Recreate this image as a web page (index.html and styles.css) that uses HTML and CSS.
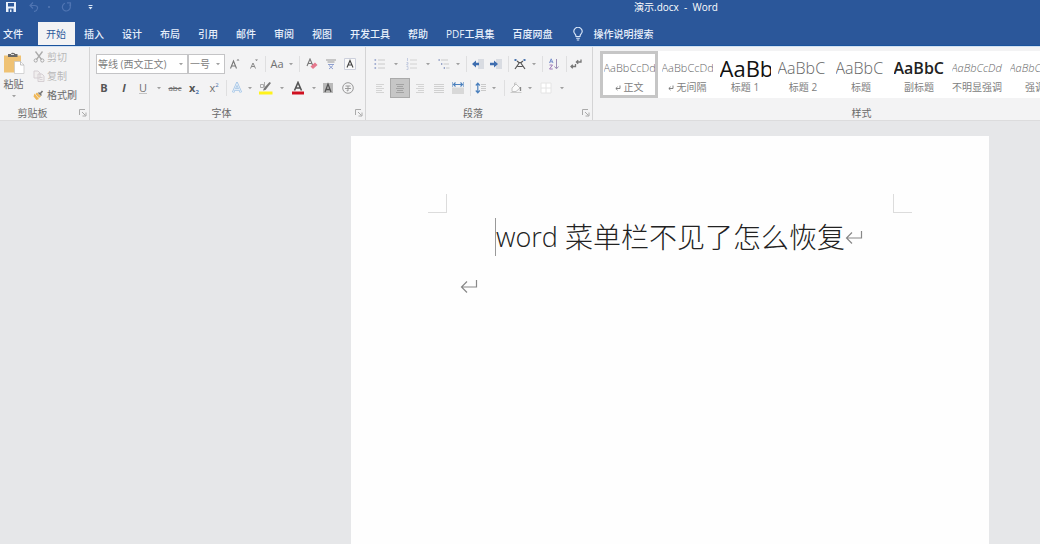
FILE: index.html
```html
<!DOCTYPE html>
<html lang="zh-CN">
<head>
<meta charset="utf-8">
<title>演示.docx - Word</title>
<link rel="stylesheet" href="styles.css">
</head>
<body>
<svg class="defs" aria-hidden="true">
  <symbol id="caret" viewBox="0 0 6 4"><path d="M1 1h4L3 3.200z" fill="#a0a0a0"/></symbol>
  <symbol id="launch" viewBox="0 0 8 8"><path d="M.5 6V.5H6M3 3l3.500 3.500M7 3.500V7H3.500" fill="none" stroke="#aaa"/></symbol>
  <symbol id="ret" viewBox="0 0 18 18"><path d="M16.500 3v7H2M7 4.500L1.500 10 7 15.500" fill="none" stroke="#888" stroke-width="1.200"/></symbol>
  <symbol id="smallret" viewBox="0 0 6 6"><path d="M5 .5V3.500H1M2.600 1.800L.8 3.500l1.800 1.700" fill="none" stroke="#777" stroke-width=".9"/></symbol>
</svg>
<header class="header">
  <div class="titlebar">
    <div class="quick">
      <button class="qbtn" aria-label="保存"><svg width="10" height="10" viewBox="0 0 10 10"><path d="M0 0h10v10H0z" fill="#e8f0fb"/><path d="M2 1h6v3.500H2zM2.500 6.500h5V10h-5z" fill="#2b579a"/><path d="M4 7.500h1.500V10H4z" fill="#e8f0fb"/></svg></button>
      <button class="qbtn wide" aria-label="撤消"><svg width="10" height="10" viewBox="0 0 10 10"><path d="M4 .5L1 3.500l3 3M1 3.500h4.500q3.500.2 3 3Q8 9 5 9.500" fill="none" stroke="#4f74b2" stroke-width="1.200"/></svg></button>
      <span class="qdot"></span>
      <button class="qbtn wide" aria-label="恢复"><svg width="11" height="10" viewBox="0 0 11 10"><path d="M8.500 2.500A4 4 0 1 1 4 1.200M6 .8h3.500v3.500" fill="none" stroke="#4f74b2" stroke-width="1.200"/></svg></button>
      <button class="qbtn more" aria-label="自定义快速访问工具栏"><svg width="5" height="5" viewBox="0 0 5 5"><path d="M.5 0h4v1h-4zM.5 2h4l-2 2.500z" fill="#dfe9f7"/></svg></button>
    </div>
    <div class="doctitle">演示.docx &nbsp;-&nbsp; Word</div>
  </div>
  <nav class="tabs">
    <button class="tab first">文件</button>
    <button class="tab active">开始</button>
    <button class="tab">插入</button>
    <button class="tab">设计</button>
    <button class="tab">布局</button>
    <button class="tab">引用</button>
    <button class="tab">邮件</button>
    <button class="tab">审阅</button>
    <button class="tab">视图</button>
    <button class="tab">开发工具</button>
    <button class="tab">帮助</button>
    <button class="tab">PDF工具集</button>
    <button class="tab">百度网盘</button>
    <button class="tab tell"><svg width="10" height="14" viewBox="0 0 10 14"><path d="M3 9.500Q3 8 2 7A4 4 0 1 1 8 7Q7 8 7 9.500zM3.200 11.300h3.600M3.800 13h2.400" fill="none" stroke="#dbe8fa" stroke-width="1.100"/></svg>操作说明搜索</button>
  </nav>
</header>
<section class="ribbon">
  <div class="group clipboard">
    <div class="content clip">
      <button class="paste">
        <svg width="22" height="22" viewBox="0 0 22 22"><path d="M1 3.500h17v17H1z" fill="#efc274"/><path d="M5 2h3q.5-2 3-1 .8 0 1 1h2.500v3H5z" fill="#686868"/><path d="M8 2h3v1H8z" fill="#ddd"/><path d="M11.500 9.500h6l3.500 3.500v8.500h-9.500z" fill="#fff" stroke="#c4c4c4" stroke-width=".7"/><path d="M17.500 9.500V13H21" fill="none" stroke="#aaa" stroke-width=".7"/></svg>
        <span>粘贴</span>
        <svg width="6" height="4"><use href="#caret"/></svg>
      </button>
      <div class="cliplist">
        <button class="cmd off"><svg width="12" height="12" viewBox="0 0 12 12"><path d="M2.500.5l6 8M9.500.5l-6 8" stroke="#aaa" stroke-width="1.300"/><g fill="none" stroke="#aaa"><circle cx="2.700" cy="9.500" r="1.600"/><circle cx="9.300" cy="9.500" r="1.600"/></g></svg>剪切</button>
        <button class="cmd off"><svg width="12" height="12" viewBox="0 0 12 12"><path d="M1 1h4l2 2v5H1zM5 4h4l2 2v5.500H5z" fill="#f0eeee" stroke="#d2ccd0" stroke-width=".9"/><path d="M6.500 7.500h3M6.500 9.500h3" stroke="#d2ccd0" stroke-width=".8"/></svg>复制</button>
        <button class="cmd"><svg width="12" height="12" viewBox="0 0 12 12"><path d="M1.500 4.500L6 10l-2.500 1-3-3.500z" fill="#efb757"/><path d="M4 3.500l4 4-2 1.500L2.500 5z" fill="#efb757"/><path d="M5.500 3.500l3 3" stroke="#777" stroke-width="1.500"/><path d="M7 5l2.500-3" stroke="#777" stroke-width="1.600"/></svg>格式刷</button>
      </div>
    </div>
    <div class="foot"><span>剪贴板</span><button class="launch" aria-label="剪贴板设置"><svg width="8" height="8"><use href="#launch"/></svg></button></div>
  </div>

  <div class="group font">
    <div class="content rows">
      <div class="row">
        <label class="combo w92"><select aria-label="字体"><option>等线 (西文正文)</option></select><svg width="6" height="4"><use href="#caret"/></svg></label>
        <label class="combo w37"><select aria-label="字号"><option>一号</option></select><svg width="6" height="4"><use href="#caret"/></svg></label>
        <button class="b w20" aria-label="增大字号"><svg width="12" height="12" viewBox="0 0 12 12"><path d="M1.500 10.500L4.500 3l3 7.500M2.600 8h3.800" fill="none" stroke="#777" stroke-width="1.100"/><path d="M7.500 2.500L9 1 10.500 2.500z" fill="#777"/></svg></button>
        <button class="b w18" aria-label="减小字号"><svg width="12" height="12" viewBox="0 0 12 12"><path d="M2.500 10.500L5 5l2.500 5.500M3.500 8.500h3" fill="none" stroke="#888"/><path d="M7 1.500h3L8.500 3z" fill="#777"/></svg></button>
        <span class="sep w4"></span>
        <button class="b w20 txt">Aa</button>
        <button class="b w8" aria-label="更改大小写选项"><svg width="6" height="4"><use href="#caret"/></svg></button>
        <span class="sep w8"></span>
        <button class="b w18" aria-label="清除格式"><svg width="12" height="12" viewBox="0 0 12 12"><path d="M1 8L4 1l3 7M2.200 5.500h3.600" fill="none" stroke="#777" stroke-width="1.100"/><path d="M4.500 8.500l4.500-4 2.500 2.500-4.500 4z" fill="#e5788d"/></svg></button>
        <button class="b w20" aria-label="拼音指南"><svg width="12" height="12" viewBox="0 0 12 12"><path d="M1 2h10M2.500 4h7" stroke="#999"/><path d="M3 6.500h6M4 7.500l4 3.500M8 7.500L4 11" fill="none" stroke="#8e9fd0"/></svg></button>
        <button class="b w18" aria-label="字符边框"><svg width="12" height="12" viewBox="0 0 12 12"><path d="M.5.5h11v11H.5z" fill="#fafafa" stroke="#cdd0dc"/><path d="M3 9.500l3-7 3 7M4.200 7h3.600" fill="none" stroke="#444" stroke-width="1.100"/></svg></button>
      </div>
      <div class="row">
        <button class="b w20 txt bold">B</button>
        <button class="b w20 txt bold ital">I</button>
        <button class="b w18 txt under">U</button>
        <button class="b w14" aria-label="下划线选项"><svg width="6" height="4"><use href="#caret"/></svg></button>
        <button class="b w18 strike">abc</button>
        <button class="b w20 txt bold">x<sub>2</sub></button>
        <button class="b w20 txt">x<sup>2</sup></button>
        <span class="sep w4"></span>
        <button class="b w18" aria-label="文本效果"><svg width="12" height="12" viewBox="0 0 12 12"><path d="M2 10.500L6 1.500l4 9M3.500 7.500h5" fill="none" stroke="#a4c5e6" stroke-width="2.400"/><path d="M2 10.500L6 1.500l4 9M3.500 7.500h5" fill="none" stroke="#f1f6fb" stroke-width=".8"/></svg></button>
        <button class="b w8" aria-label="文本效果选项"><svg width="6" height="4"><use href="#caret"/></svg></button>
        <button class="b w24" aria-label="突出显示"><svg width="14" height="14" viewBox="0 0 14 14"><path d="M0 10.500h13.500V13.500H0z" fill="#fff21b"/><path d="M12 2L6.500 9 4 9.500l1-2.500 5.500-6z" fill="#777"/><path d="M1.500 3.500h3v3h-3zM5.500 1v5" fill="none" stroke="#999" stroke-width=".8"/></svg></button>
        <button class="b w8" aria-label="突出显示选项"><svg width="6" height="4"><use href="#caret"/></svg></button>
        <button class="b w24" aria-label="字体颜色"><svg width="14" height="14" viewBox="0 0 14 14"><path d="M1 10.500h12V13.500H1z" fill="#cf1020"/><path d="M3.500 9.500L7 1.500l3.500 8M4.700 7h4.600" fill="none" stroke="#555" stroke-width="1.600"/></svg></button>
        <button class="b w8" aria-label="字体颜色选项"><svg width="6" height="4"><use href="#caret"/></svg></button>
        <button class="b w20" aria-label="字符底纹"><svg width="12" height="12" viewBox="0 0 12 12"><path d="M1 1h10v10H1z" fill="#b9b9b9"/><path d="M3 10l3-8 3 8M4 7.500h4" fill="none" stroke="#555" stroke-width="1.300"/></svg></button>
        <button class="b w20" aria-label="带圈字符"><svg width="12" height="12" viewBox="0 0 12 12"><circle cx="6" cy="6" r="5.300" fill="none" stroke="#999"/><path d="M3.500 4h5M3 6.500h6M6 4v5L4.700 8.500" fill="none" stroke="#999"/></svg></button>
      </div>
    </div>
    <div class="foot"><span>字体</span><button class="launch" aria-label="字体设置"><svg width="8" height="8"><use href="#launch"/></svg></button></div>
  </div>

  <div class="group para">
    <div class="content rows">
      <div class="row">
        <button class="b w20" aria-label="项目符号"><svg width="12" height="12" viewBox="0 0 12 12"><path d="M4 2h7M4 6h7M4 10h7" stroke="#cacaca"/><path d="M.5 1.200h1.600v1.600H.5zM.5 5.200h1.600v1.600H.5zM.5 9.200h1.600v1.600H.5z" fill="#8d9cc8"/></svg></button>
        <button class="b w12" aria-label="项目符号选项"><svg width="6" height="4"><use href="#caret"/></svg></button>
        <button class="b w20" aria-label="编号"><svg width="12" height="12" viewBox="0 0 12 12"><path d="M4 2h7M4 6h7M4 10h7" stroke="#d2d2d2"/><path d="M1.500 0v3M.5 4.500h1.500v1.500H.8v1h1.500M.5 8.500h1.500v3H.5" fill="none" stroke="#b9c2da" stroke-width=".8"/></svg></button>
        <button class="b w12" aria-label="编号选项"><svg width="6" height="4"><use href="#caret"/></svg></button>
        <button class="b w20" aria-label="多级列表"><svg width="12" height="12" viewBox="0 0 12 12"><path d="M3 2h7M5.500 6H11M8 10h3.500" stroke="#cacaca"/><path d="M.5 1h1.300v2H.5zM3 5h1.300v2H3zM5.700 9H7v2H5.700z" fill="#9aa6c8"/></svg></button>
        <button class="b w8" aria-label="多级列表选项"><svg width="6" height="4"><use href="#caret"/></svg></button>
        <span class="sep w8"></span>
        <button class="b w16" aria-label="减少缩进"><svg width="12" height="12" viewBox="0 0 12 12"><path d="M6 1h6v10H6z" fill="#d9dce2"/><path d="M0 6l4-3.500v2.300h3v2.400H4v2.300z" fill="#3f6eb0"/></svg></button>
        <button class="b w20" aria-label="增加缩进"><svg width="12" height="12" viewBox="0 0 12 12"><path d="M6 1h6v10H6z" fill="#d9dce2"/><path d="M8 6L4 2.500v2.300H0v2.400h4v2.300z" fill="#3f6eb0"/></svg></button>
        <span class="sep w4"></span>
        <button class="b w20" aria-label="中文版式"><svg width="12" height="12" viewBox="0 0 12 12"><path d="M1 11l4.500-6.500h1L11 11M3.500 8.500h5M3 3l2.500 2M9 3L6.500 5" fill="none" stroke="#555" stroke-width="1.200"/><path d="M.5 1h2v2h-2zM9.500 1h2v2h-2z" fill="#4b74ad"/></svg></button>
        <button class="b w8" aria-label="中文版式选项"><svg width="6" height="4"><use href="#caret"/></svg></button>
        <span class="sep w8"></span>
        <button class="b w16" aria-label="排序"><svg width="12" height="12" viewBox="0 0 12 12"><path d="M1.500 5L3.200.8 5 5M2 3.800h2.500" fill="none" stroke="#7c92cc"/><path d="M1.500 7h3l-3 4h3.300" fill="none" stroke="#a07bb8"/><path d="M8.500 1v9.500M6.500 8.500l2 2.300 2-2.300" fill="none" stroke="#9c8db5"/></svg></button>
        <span class="sep w8"></span>
        <button class="b w12" aria-label="显示编辑标记"><svg width="12" height="12" viewBox="0 0 12 12"><path d="M11 1.500v2.500H6.500M8.200 2.200L6.400 4l1.800 1.800M5.500 6v2.500H1M2.800 6.700L1 8.500l1.800 1.800" fill="none" stroke="#777" stroke-width="1.300"/></svg></button>
      </div>
      <div class="row">
        <button class="b w20" aria-label="左对齐"><svg width="10" height="10" viewBox="0 0 10 10"><path d="M1 1.500h8M1 3.500h6M1 5.500h8M1 7.500h6M1 9.500h8" stroke="#d4d4d4"/></svg></button>
        <button class="b w20 on" aria-label="居中"><svg width="10" height="10" viewBox="0 0 10 10"><path d="M1 1.500h8M2 3.500h6M1 5.500h8M2 7.500h6M1 9.500h8" stroke="#a2a2a2"/></svg></button>
        <button class="b w20" aria-label="右对齐"><svg width="10" height="10" viewBox="0 0 10 10"><path d="M1 1.500h8M3 3.500h6M1 5.500h8M3 7.500h6M1 9.500h8" stroke="#d4d4d4"/></svg></button>
        <button class="b w18" aria-label="两端对齐"><svg width="10" height="10" viewBox="0 0 10 10"><path d="M0 1.500h10M0 3.500h10M0 5.500h10M0 7.500h10M0 9.500h10" stroke="#d0d0d0"/></svg></button>
        <button class="b w20" aria-label="分散对齐"><svg width="12" height="12" viewBox="0 0 12 12"><path d="M0 5.500h12V12H0z" fill="#d8d8d8"/><path d="M0 0v5M12 0v5M1 2.500h10M3.500.5l-2 2 2 2M8.500.5l2 2-2 2" fill="none" stroke="#4b80bd" stroke-width="1.100"/></svg></button>
        <span class="sep w4"></span>
        <button class="b w18" aria-label="行距"><svg width="12" height="12" viewBox="0 0 12 12"><path d="M6 2.500h5M6 4.500h5M6 6.500h5M6 8.500h5" stroke="#cacaca"/><path d="M2.800 1v10M.8 3.500l2-2.300 2 2.300M.8 8.500l2 2.300 2-2.300" fill="none" stroke="#4b80bd" stroke-width="1.200"/></svg></button>
        <button class="b w8" aria-label="行距选项"><svg width="6" height="4"><use href="#caret"/></svg></button>
        <span class="sep w12"></span>
        <button class="b w12" aria-label="底纹"><svg width="12" height="12" viewBox="0 0 12 12"><path d="M2 6l4-4 4 4-4 3.500H2zM4.500 4V1h2" fill="#fafafa" stroke="#c4c4c4"/><path d="M10.500 5v4" stroke="#888" stroke-width="1.300"/><path d="M.5 10.500h11" stroke="#ccc"/></svg></button>
        <button class="b w16" aria-label="底纹选项"><svg width="6" height="4"><use href="#caret"/></svg></button>
        <button class="b w16" aria-label="边框"><svg width="12" height="12" viewBox="0 0 12 12"><path d="M1 1h10v10H1zM6 1v10M1 6h10" fill="#fff" stroke="#e4e4e4"/></svg></button>
        <button class="b w16" aria-label="边框选项"><svg width="6" height="4"><use href="#caret"/></svg></button>
      </div>
    </div>
    <div class="foot"><span>段落</span><button class="launch" aria-label="段落设置"><svg width="8" height="8"><use href="#launch"/></svg></button></div>
  </div>

  <div class="group styles">
    <div class="content gallery">
      <button class="style sel"><span class="sample">AaBbCcDd</span><span class="name"><svg width="6" height="6"><use href="#smallret"/></svg>正文</span></button>
      <button class="style"><span class="sample">AaBbCcDd</span><span class="name"><svg width="6" height="6"><use href="#smallret"/></svg>无间隔</span></button>
      <button class="style"><span class="sample h1">AaBb</span><span class="name">标题 1</span></button>
      <button class="style"><span class="sample h2">AaBbC</span><span class="name">标题 2</span></button>
      <button class="style"><span class="sample h2">AaBbC</span><span class="name">标题</span></button>
      <button class="style"><span class="sample h2 strong">AaBbC</span><span class="name">副标题</span></button>
      <button class="style"><span class="sample em">AaBbCcDd</span><span class="name">不明显强调</span></button>
      <button class="style"><span class="sample em">AaBbCcDd</span><span class="name">强调</span></button>
    </div>
    <div class="foot"><span>样式</span></div>
  </div>
</section>
<main class="workspace">
  <article class="page">
    <div class="corners"><i class="corner left"></i><i class="corner right"></i></div>
    <div class="body">
      <h1 class="heading"><span class="cursor"></span><span class="latin">word </span>菜单栏不见了怎么恢复<svg class="mark" width="18" height="18"><use href="#ret"/></svg></h1>
      <p class="line"><svg width="18" height="18"><use href="#ret"/></svg></p>
    </div>
  </article>
</main>
</body>
</html>
```

FILE: styles.css
```css
* { box-sizing: border-box; }
body {
  margin: 0;
  min-height: 100vh;
  display: flex;
  flex-direction: column;
  overflow-x: hidden;
  background: #e6e7e9;
  font-family: "Open Sans", "Noto Sans CJK SC", sans-serif;
  font-size: 10px;
  line-height: 14px;
  color: #6a6a6a;
}
button {
  margin: 0;
  padding: 0;
  border: 0;
  background: none;
  font: inherit;
  color: inherit;
  white-space: nowrap;
}
svg { display: block; flex: none; }
.defs { position: absolute; width: 0; height: 0; }

.header { background: #2b579a; color: #e9f1fc; border-bottom: 1px solid #1a539c; }
.titlebar { display: grid; grid-template-columns: 1fr auto 1fr; height: 22px; padding-left: 6px; }
.quick { display: flex; align-items: center; height: 14px; }
.qbtn { display: flex; justify-content: center; width: 10px; }
.qbtn.wide { width: 24px; margin-left: 6px; }
.qbtn.more { width: 24px; }
.qdot { width: 2px; height: 2px; margin-left: 2px; background: #4a70ad; }
.qdot + .qbtn.wide { margin-left: 4px; }
.doctitle { grid-column: 2; margin-left: 306px; color: #fff; }
.tabs { display: flex; }
.tab { height: 23px; padding: 0 9px; font-weight: 500; }
.tab.first { padding: 0 15px 0 3px; }
.tab.active { background: #f3f3f4; color: #2b579a; font-weight: 400; padding: 0 9px 0 8px; }
.tab.tell { display: flex; align-items: center; gap: 10px; padding-left: 12px; }

.ribbon {
  display: flex;
  height: 75px;
  overflow: hidden;
  background: #f3f3f4;
  border-top: 1px solid #cfe0f3;
  border-bottom: 1px solid #dcdcdd;
}
.group { display: flex; flex-direction: column; flex: none; padding: 3px 0 0; border-right: 1px solid #d4d4d5; }
.content { flex: 1; }
.foot { display: flex; align-items: center; height: 14px; text-align: center; }
.foot span { flex: 1; }
.launch { display: flex; justify-content: center; width: 12px; }
.clipboard { width: 90px; }
.clipboard .foot span { padding-right: 12px; }
.font { width: 276px; }
.para { width: 227px; }

.clip { display: flex; gap: 6px; }
.paste { display: flex; flex-direction: column; align-items: center; width: 27px; padding-top: 2px; }
.paste span { margin: 3px 0; }
.cliplist { display: flex; flex-direction: column; gap: 5px; }
.cmd { display: flex; align-items: center; gap: 2px; height: 14px; }
.off { color: #b8b8b8; }

.rows { display: flex; flex-direction: column; gap: 4px; padding: 4px 0 0 4px; }
.row { display: flex; align-items: center; height: 20px; }
.b { display: flex; align-items: center; justify-content: center; height: 20px; flex: none; }
.on { background: #c6c6c6; border: 1px solid #aaa; }
.w4 { width: 4px; } .w8 { width: 8px; } .w12 { width: 12px; } .w14 { width: 14px; }
.w16 { width: 16px; } .w18 { width: 18px; } .w20 { width: 20px; } .w24 { width: 24px; }
.sep { display: flex; justify-content: center; height: 16px; }
.sep::before { content: ""; width: 1px; background: #dfdfe0; }
.txt { font-size: 11px; color: #707070; }
.bold { font-weight: 700; color: #555; }
.ital { font-style: italic; }
.under { text-decoration: underline #c4c4c4; }
.strike { font-size: 8px; text-decoration: line-through; }
sub, sup { font-size: 6px; line-height: 6px; }
sup { align-self: flex-start; padding-top: 4px; color: #4b74ad; }
sub { align-self: flex-end; padding-bottom: 3px; color: #4b74ad; }
.combo { display: flex; align-items: center; height: 20px; padding-right: 3px; background: #fff; border: 1px solid #c4c4c6; flex: none; }
.combo select { flex: 1; min-width: 0; height: 18px; padding: 0 0 0 1px; border: 0; appearance: none; background: none; font: inherit; color: #808080; }
.w92 { width: 92px; margin-left: 2px; }
.w37 { width: 37px; }

.styles { padding-right: 60px; }
.gallery { display: flex; margin: 1px 0 0 7px; flex: none; height: 47px; background: #fff; }
.group.styles .foot { margin-top: auto; padding-left: 66px; }
.style { display: flex; flex-direction: column; align-items: center; width: 58px; padding: 4px 3px 0; overflow: hidden; }
.sel { border: 3px solid #c6c6c6; padding: 1px 0 0; }
.sample { width: 51px; height: 26px; line-height: 26px; overflow: hidden; text-align: left; font-size: 11px; font-weight: 300; color: #666; }
.sample.h1 { font-size: 22px; font-weight: 400; color: #111; }
.sample.h2 { font-size: 16px; }
.sample.strong { font-weight: 600; color: #222; }
.sample.em { font-style: italic; }
.name { display: flex; align-items: center; gap: 3px; white-space: pre; line-height: 13px; color: #808080; }

.workspace { flex: 1; display: flex; padding: 15px 51px 0 351px; }
.page { flex: 1; background: #fefefe; padding: 58px 77px 0; }
.corners { display: flex; justify-content: space-between; }
.corner { width: 19px; height: 19px; border-bottom: 1px solid #dcdcdc; }
.left { border-right: 1px solid #dcdcdc; }
.right { border-left: 1px solid #dcdcdc; }
.body { padding: 5px 19px 0; }
.heading { display: flex; align-items: center; justify-content: center; margin: 0; height: 38px; font-size: 28px; line-height: 38px; font-weight: 300; color: #222; white-space: pre; }
.latin { font-size: 27px; }
.cursor { width: 1px; height: 38px; background: #999; }
.mark { margin-right: -18px; }
.line { margin: 21px 0 0; padding-left: 13px; }
```
